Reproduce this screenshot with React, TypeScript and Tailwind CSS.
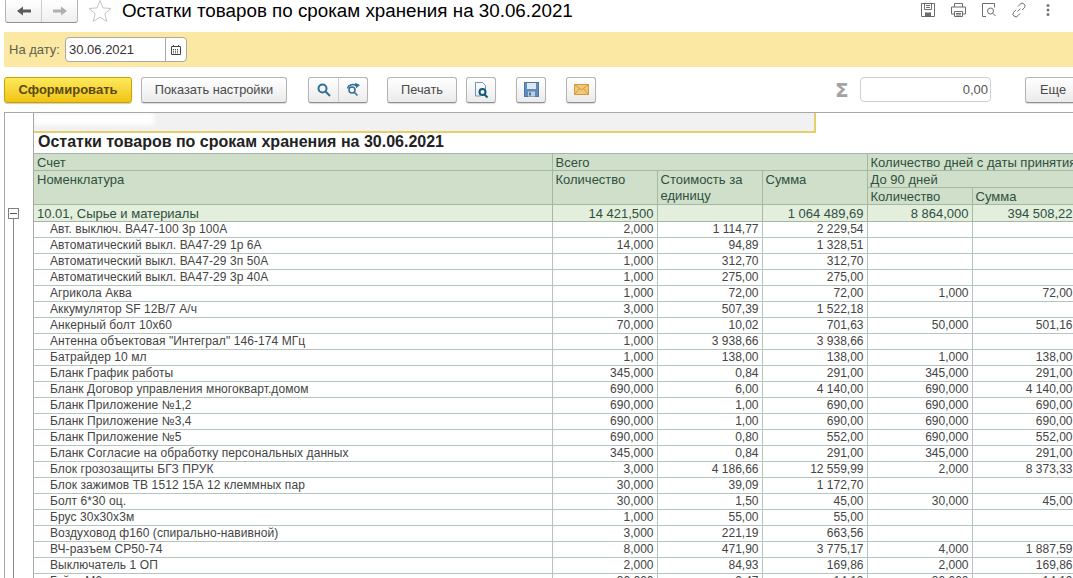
import React from "react";

const font = "font-['Liberation_Sans',Arial,sans-serif]";

type Row = [string, string, string, string, string, string];

const rows: Row[] = [
  ["Авт. выключ. ВА47-100 3р 100А", "2,000", "1 114,77", "2 229,54", "", ""],
  ["Автоматический выкл. ВА47-29 1р 6А", "14,000", "94,89", "1 328,51", "", ""],
  ["Автоматический выкл. ВА47-29 3п 50А", "1,000", "312,70", "312,70", "", ""],
  ["Автоматический выкл. ВА47-29 3р 40А", "1,000", "275,00", "275,00", "", ""],
  ["Агрикола Аква", "1,000", "72,00", "72,00", "1,000", "72,00"],
  ["Аккумулятор SF 12В/7 А/ч", "3,000", "507,39", "1 522,18", "", ""],
  ["Анкерный болт 10х60", "70,000", "10,02", "701,63", "50,000", "501,16"],
  ["Антенна объектовая \"Интеграл\" 146-174 МГц", "1,000", "3 938,66", "3 938,66", "", ""],
  ["Батрайдер 10 мл", "1,000", "138,00", "138,00", "1,000", "138,00"],
  ["Бланк График работы", "345,000", "0,84", "291,00", "345,000", "291,00"],
  ["Бланк Договор управления многокварт.домом", "690,000", "6,00", "4 140,00", "690,000", "4 140,00"],
  ["Бланк Приложение №1,2", "690,000", "1,00", "690,00", "690,000", "690,00"],
  ["Бланк Приложение №3,4", "690,000", "1,00", "690,00", "690,000", "690,00"],
  ["Бланк Приложение №5", "690,000", "0,80", "552,00", "690,000", "552,00"],
  ["Бланк Согласие на обработку персональных данных", "345,000", "0,84", "291,00", "345,000", "291,00"],
  ["Блок грозозащиты БГЗ ПРУК", "3,000", "4 186,66", "12 559,99", "2,000", "8 373,33"],
  ["Блок зажимов ТВ 1512 15А 12 клеммных пар", "30,000", "39,09", "1 172,70", "", ""],
  ["Болт 6*30 оц.", "30,000", "1,50", "45,00", "30,000", "45,00"],
  ["Брус 30х30х3м", "1,000", "55,00", "55,00", "", ""],
  ["Воздуховод ф160 (спирально-навивной)", "3,000", "221,19", "663,56", "", ""],
  ["ВЧ-разъем СР50-74", "8,000", "471,90", "3 775,17", "4,000", "1 887,59"],
  ["Выключатель 1 ОП", "2,000", "84,93", "169,86", "2,000", "169,86"],
  ["Гайка М6", "30,000", "0,47", "14,10", "30,000", "14,10"],
];

const btn =
  "h-[26px] shrink-0 flex items-center justify-center rounded-[3px] border border-[#b4b4b4] border-b-[#8f8f8f] bg-gradient-to-b from-white to-[#ebebeb] text-[12.8px] text-[#4a4a4a] shadow-[0_1px_1px_rgba(0,0,0,0.15)]";

// single-line header cells must stay inside a 17px row, the spanned ones have room for 16px lines
const headCell = "border-r border-b border-[#a3b8a3] px-[3px] pt-px align-top text-[13px] text-[#2f4f3f] font-normal text-left leading-[15px]";
const headSpanCell = "border-r border-b border-[#a3b8a3] px-[3px] pt-px align-top text-[13px] text-[#2f4f3f] font-normal text-left leading-[16px]";
const groupCell = "border-r border-b border-[#a3b8a3] px-[3px] pt-px text-[13px] text-[#2f4f3f] text-right leading-[15px]";
const bodyCell = "border-r border-b border-[#b4c4c0] pr-[3px] pl-[3px] text-[12px] text-[#444444] text-right leading-[15px] whitespace-nowrap overflow-hidden";

function TopIcons() {
  return (
    <div className="flex items-center gap-[14px] ml-auto mr-[22px] mt-[-12px] text-[#6b6b6b]">
      <svg width="16" height="16" viewBox="0 0 16 16" fill="none" stroke="#6b6b6b">
        <path d="M1.5 1.5h13v13h-13z M4.5 1.5v6h7v-6 M6 3.5h4 M6 5.5h4" />
        <rect x="5" y="10.5" width="6" height="4" fill="#6b6b6b" stroke="none" />
      </svg>
      <svg width="17" height="16" viewBox="0 0 17 16" fill="none" stroke="#6b6b6b">
        <path d="M4.5 5V1.5h8V5 M4.5 12H1.5V5h14v7h-3 M4.5 9.5h8v5h-8z M6 11.5h5 M6 13h5" />
      </svg>
      <svg width="16" height="16" viewBox="0 0 16 16" fill="none" stroke="#6b6b6b">
        <path d="M5 14.5H1.5v-13h12v4" />
        <circle cx="9.5" cy="9" r="3" />
        <path d="M11.7 11.2l2.8 2.8" />
      </svg>
      <svg width="16" height="16" viewBox="0 0 16 16" fill="none" stroke="#6b6b6b">
        <path d="M6.5 9.5l3-3 M7 4.5l2-2.2a2.4 2.4 0 0 1 4.4 3.4l-2.4 2.4 M9 11.5l-2 2.2a2.4 2.4 0 0 1-4.4-3.4l2.4-2.4" />
      </svg>
      <svg width="6" height="16" viewBox="0 0 6 16" fill="#777777" className="ml-[4px]">
        <circle cx="3" cy="3.5" r="1.5" />
        <circle cx="3" cy="8" r="1.5" />
        <circle cx="3" cy="12.5" r="1.5" />
      </svg>
    </div>
  );
}

export default function App() {
  return (
    <div className={`w-[1073px] h-[578px] overflow-hidden bg-white ${font}`}>
      {/* Title bar */}
      <div className="h-[32px] flex items-center pl-[5px]">
        <div className="flex h-[23px] w-[73px] mt-[-10px] rounded-b-[3px] border border-t-0 border-[#b4b4b4] border-b-[#8f8f8f] bg-gradient-to-b from-white to-[#eeeeee]">
          <div className="w-[36px] flex items-center justify-center border-r border-[#cccccc]">
            <svg width="14" height="10" viewBox="0 0 14 10" fill="#5a5a5a">
              <path d="M0 5l6-4.500V3.500h8v3H6v3z" />
            </svg>
          </div>
          <div className="flex-1 flex items-center justify-center">
            <svg width="14" height="10" viewBox="0 0 14 10" fill="#b0b0b0">
              <path d="M14 5L8 .5V3.500H0v3h8v3z" />
            </svg>
          </div>
        </div>
        <svg width="24" height="24" viewBox="0 0 24 24" fill="none" stroke="#c4c4c4" className="ml-[10px] mt-[-10px]">
          <path d="M12 1.500l3 7.400 8 .6-6.100 5.100 1.900 7.800L12 18.200 5.200 22.400l1.900-7.800L1 9.500l8-.6z" />
        </svg>
        <span className="ml-[10px] mt-[-10px] text-[18.800px] leading-[24px] text-black whitespace-nowrap">
          Остатки товаров по срокам хранения на 30.06.2021
        </span>
        <TopIcons />
      </div>

      {/* Date band */}
      <div className="ml-[4px] h-[35px] bg-[#fbe8a3] flex items-center pl-[5px]">
        <span className="text-[13px] text-[#5f5f50]">На дату:</span>
        <div className="ml-[5px] flex h-[25px] w-[122px] rounded-[4px] border border-[#a8a8a8] bg-white">
          <div className="w-[100px] flex items-center pl-[3px] border-r border-[#a8a8a8] text-[13px] text-[#333333]">30.06.2021</div>
          <div className="flex-1 flex items-center justify-center">
            <svg width="10" height="10" viewBox="0 0 10 10" fill="none" stroke="#444444">
              <path d="M.5 1.500h9v8h-9z M2.500 0v2 M7.500 0v2" />
              <path d="M2 4.500h6 M2 6.200h6 M2 7.900h6" strokeDasharray="1 1" />
            </svg>
          </div>
        </div>
      </div>

      {/* Toolbar */}
      <div className="h-[45px] flex items-center pl-[4px]">
        <div className="h-[26px] w-[128px] shrink-0 flex items-center justify-center rounded-[3px] border border-[#c9a400] bg-gradient-to-b from-[#fde95a] to-[#f0c400] text-[13px] font-bold text-[#5a4a10] shadow-[0_1px_1px_rgba(0,0,0,0.2)]">
          Сформировать
        </div>
        <div className={`${btn} w-[146px] ml-[9px]`}>Показать настройки</div>
        <div className={`${btn} w-[60px] ml-[21px]`}>
          <div className="w-[30px] h-full flex items-center justify-center border-r border-[#cccccc]">
            <svg width="14" height="14" viewBox="0 0 14 14" fill="none" stroke="#2f6f95" strokeWidth="2">
              <circle cx="5.500" cy="5.500" r="4" />
              <path d="M8.500 8.500l4.500 4.500" />
            </svg>
          </div>
          <div className="flex-1 flex items-center justify-center">
            <svg width="15" height="15" viewBox="0 0 15 15" fill="none" stroke="#2f6f95" strokeWidth="1.500">
              <circle cx="6" cy="8" r="3" />
              <path d="M8.200 10.200l3.300 3.300 M1.500 6.500C2 3 6.500 1.500 10 3.500" />
              <path d="M9 .8l5 2.200-3.800 3.200z" fill="#2f6f95" stroke="none" />
            </svg>
          </div>
        </div>
        <div className={`${btn} w-[70px] ml-[19px]`}>Печать</div>
        <div className={`${btn} w-[30px] ml-[9px]`}>
          <svg width="16" height="18" viewBox="0 0 16 18" fill="none">
            <path d="M2.500 1.500h7l3 3V8 M2.500 1.500V15h5" stroke="#6f93b5" />
            <circle cx="9.500" cy="11" r="3" stroke="#0f5a78" strokeWidth="2" />
            <path d="M11.500 13.500l3 3" stroke="#0f5a78" strokeWidth="2" />
          </svg>
        </div>
        <div className={`${btn} w-[30px] ml-[20px]`}>
          <svg width="15" height="15" viewBox="0 0 15 15">
            <rect x="0.500" y="0.500" width="14" height="14" fill="#5f8dbb" stroke="#4a77a5" />
            <rect x="3" y="1" width="9" height="6" fill="#dfe8f2" />
            <rect x="4" y="9.500" width="7" height="5" fill="#b9cde0" />
            <rect x="5" y="10.500" width="2" height="3" fill="#4a77a5" />
          </svg>
        </div>
        <div className={`${btn} w-[30px] ml-[20px]`}>
          <svg width="15" height="11" viewBox="0 0 15 11">
            <rect x="0.500" y="0.500" width="14" height="10" fill="#f2c878" stroke="#d29a3c" />
            <path d="M.5.500l7 5.500 7-5.500 M.5 10.500l5-6 M14.500 10.500l-5-6" fill="none" stroke="#d29a3c" />
          </svg>
        </div>
        <span className="ml-[239px] w-[14px] shrink-0 text-[20px] font-bold leading-none text-[#a3a3a3] font-['DejaVu_Sans',sans-serif]">Σ</span>
        <div className="ml-[11px] w-[131px] shrink-0 h-[25px] flex items-center justify-end pr-[2px] rounded-[4px] border border-[#cfcfcf] bg-white text-[13px] text-[#555555]">
          0,00
        </div>
        <div className={`${btn} w-[56px] ml-[34px]`}>Еще</div>
      </div>

      {/* Report */}
      <div className="ml-[4px] flex h-[466px] border-t border-[#a8a8a8] border-l overflow-hidden">
        {/* Grouping gutter */}
        <div className="w-[29px] shrink-0 border-r border-[#a8a8a8] bg-white">
          <div className="h-[95px]" />
          <div className="ml-[3px] w-[11px] h-[11px] border border-[#7f7f7f] flex items-center justify-center">
            <div className="w-[7px] h-px bg-[#555555]" />
          </div>
          <div className="ml-[8px] w-px h-[400px] bg-[#8a8a8a]" />
        </div>

        <div className="flex-1 min-w-0 overflow-hidden">
          {/* Blank page header */}
          <div className="relative h-[20px] w-[782px] bg-[#f1f1f1] border-r-2 border-b-2 border-[#e6cf6a]">
            <div className="absolute left-0 top-0 w-[120px] h-[12px] bg-white blur-[2px]" />
          </div>
          <div className="h-[19px] flex items-center pl-[4px] pb-[2px] mb-px text-[16px] leading-[17px] font-bold text-[#222222] whitespace-nowrap">
            Остатки товаров по срокам хранения на 30.06.2021
          </div>

          <table className="table-fixed border-collapse w-[1042px]">
            <colgroup>
              <col className="w-[518px]" />
              <col className="w-[105px]" />
              <col className="w-[105px]" />
              <col className="w-[105px]" />
              <col className="w-[105px]" />
              <col className="w-[104px]" />
            </colgroup>
            <thead className="bg-[#cfdfc9]">
              <tr className="h-[17px] border-t border-[#a3b8a3]">
                <th className={headCell}>Счет</th>
                <th className={headCell} colSpan={3}>Всего</th>
                <th className={`${headCell} whitespace-nowrap overflow-hidden`} colSpan={2}>Количество дней с даты принятия</th>
              </tr>
              <tr className="h-[17px]">
                <th className={headSpanCell} rowSpan={2}>Номенклатура</th>
                <th className={headSpanCell} rowSpan={2}>Количество</th>
                <th className={headSpanCell} rowSpan={2}>Стоимость за единицу</th>
                <th className={headSpanCell} rowSpan={2}>Сумма</th>
                <th className={headCell} colSpan={2}>До 90 дней</th>
              </tr>
              <tr className="h-[17px]">
                <th className={headCell}>Количество</th>
                <th className={headCell}>Сумма</th>
              </tr>
            </thead>
            <tbody>
              <tr className="h-[17px] bg-[#e3eedd]">
                <td className={`${groupCell} text-left!`}>10.01, Сырье и материалы</td>
                <td className={groupCell}>14 421,500</td>
                <td className={groupCell}></td>
                <td className={groupCell}>1 064 489,69</td>
                <td className={groupCell}>8 864,000</td>
                <td className={`${groupCell} whitespace-nowrap overflow-hidden`}>394 508,22</td>
              </tr>
              {rows.map((r) => (
                <tr key={r[0]} className="h-[16px]">
                  <td className={`${bodyCell} text-left! pl-[16px]! tracking-[0.08px]`}>{r[0]}</td>
                  {r.slice(1).map((v, i) => (
                    <td key={i} className={bodyCell}>{v}</td>
                  ))}
                </tr>
              ))}
            </tbody>
          </table>
        </div>
      </div>
    </div>
  );
}
